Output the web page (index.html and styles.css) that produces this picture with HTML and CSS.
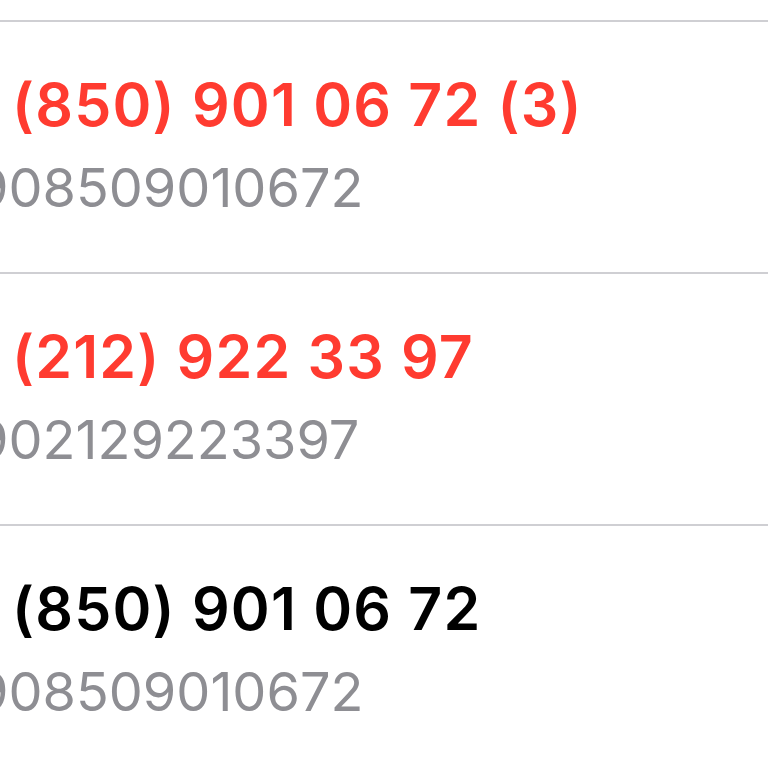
FILE: index.html
```html
<!DOCTYPE html>
<html>
<head>
<meta charset="utf-8">
<link rel="stylesheet" href="styles.css">
</head>
<body>
<div class="list">
  <div class="row">
    <div class="primary missed">(850) 901 06 72 (3)</div>
    <div class="secondary">908509010672</div>
  </div>
  <div class="row">
    <div class="primary missed">(212) 922 33 97</div>
    <div class="secondary">902129223397</div>
  </div>
  <div class="row">
    <div class="primary">(850) 901 06 72</div>
    <div class="secondary">908509010672</div>
  </div>
</div>
</body>
</html>
```
FILE: styles.css
```css
html, body {
  margin: 0;
  padding: 0;
  background: #ffffff;
  overflow: hidden;
}
.list {
  padding-top: 20px;
  font-family: Inter, "Liberation Sans", sans-serif;
}
.row {
  border-top: 2px solid #cfcfd3;
  height: 250px;
  padding-left: 12px;
  box-sizing: content-box;
  white-space: nowrap;
}
.primary {
  font-size: 59px;
  font-weight: 600;
  color: #000000;
  line-height: 70px;
  padding-top: 48px;
  letter-spacing: 1.2px;
}
.primary.missed {
  color: #ff3b30;
}
.secondary {
  font-size: 54px;
  font-weight: 400;
  color: #8e8e93;
  line-height: 60px;
  margin-top: 18px;
  margin-left: -37px;
}
```
